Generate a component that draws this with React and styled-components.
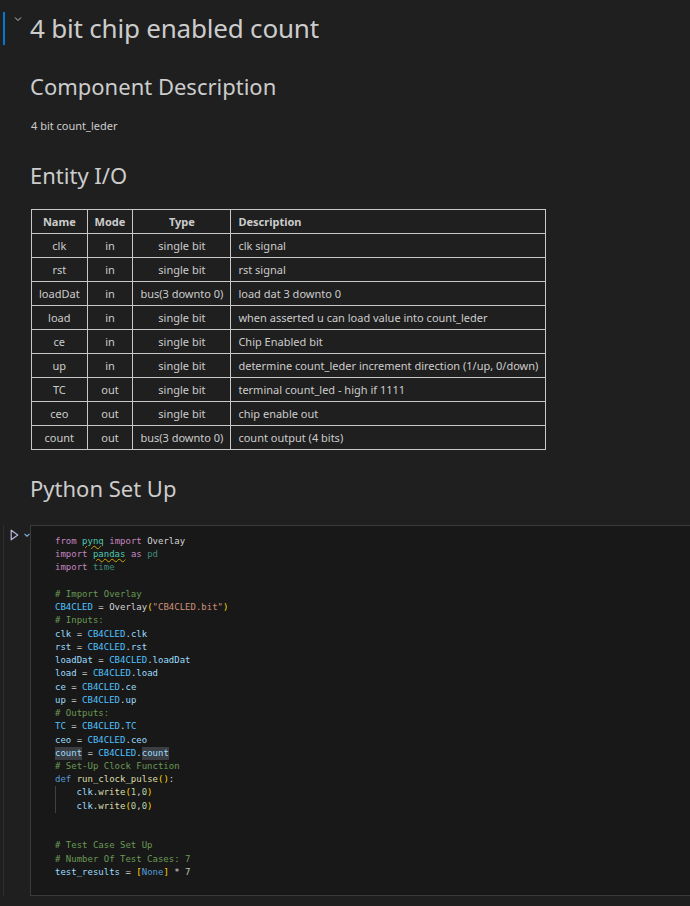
import styled, { createGlobalStyle } from "styled-components";

const Global = createGlobalStyle`
  html, body {
    margin: 0;
    padding: 0;
    background: #1f1f1f;
  }
  body {
    font-family: 'Noto Sans', 'Open Sans', sans-serif;
    color: #cccccc;
  }
`;

const rows = [
  ["clk", "in", "single bit", "clk signal"],
  ["rst", "in", "single bit", "rst signal"],
  ["loadDat", "in", "bus(3 downto 0)", "load dat 3 downto 0"],
  ["load", "in", "single bit", "when asserted u can load value into count_leder"],
  ["ce", "in", "single bit", "Chip Enabled bit"],
  ["up", "in", "single bit", "determine count_leder increment direction (1/up, 0/down)"],
  ["TC", "out", "single bit", "terminal count_led - high if 1111"],
  ["ceo", "out", "single bit", "chip enable out"],
  ["count", "out", "bus(3 downto 0)", "count output (4 bits)"],
];

const kw = "#c586c0";
const mod = "#4ec9b0";
const dim = "#3f8c7a";
const cm = "#6a9955";
const cst = "#4fc1ff";
const vr = "#9cdcfe";
const tx = "#d4d4d4";
const br = "#ffd700";
const str = "#ce9178";
const fn = "#dcdcaa";
const num = "#b5cea8";
const blue = "#569cd6";

const code = [
  [[kw, "from"], [tx, " "], [mod, "pynq", "sq"], [tx, " "], [kw, "import"], [tx, " Overlay"]],
  [[kw, "import"], [tx, " "], [mod, "pandas", "sq"], [tx, " "], [kw, "as"], [tx, " "], [dim, "pd"]],
  [[kw, "import"], [tx, " "], [dim, "time"]],
  [],
  [[cm, "# Import Overlay"]],
  [[cst, "CB4CLED"], [tx, " = Overlay"], [br, "("], [str, "\"CB4CLED.bit\""], [br, ")"]],
  [[cm, "# Inputs:"]],
  [[vr, "clk"], [tx, " = "], [cst, "CB4CLED"], [tx, "."], [vr, "clk"]],
  [[vr, "rst"], [tx, " = "], [cst, "CB4CLED"], [tx, "."], [vr, "rst"]],
  [[vr, "loadDat"], [tx, " = "], [cst, "CB4CLED"], [tx, "."], [vr, "loadDat"]],
  [[vr, "load"], [tx, " = "], [cst, "CB4CLED"], [tx, "."], [vr, "load"]],
  [[vr, "ce"], [tx, " = "], [cst, "CB4CLED"], [tx, "."], [vr, "ce"]],
  [[vr, "up"], [tx, " = "], [cst, "CB4CLED"], [tx, "."], [vr, "up"]],
  [[cm, "# Outputs:"]],
  [[cst, "TC"], [tx, " = "], [cst, "CB4CLED"], [tx, "."], [cst, "TC"]],
  [[vr, "ceo"], [tx, " = "], [cst, "CB4CLED"], [tx, "."], [vr, "ceo"]],
  [[vr, "count", "hl"], [tx, " = "], [cst, "CB4CLED"], [tx, "."], [vr, "count", "hl"]],
  [[cm, "# Set-Up Clock Function"]],
  [[blue, "def"], [tx, " "], [fn, "run_clock_pulse"], [br, "()"], [tx, ":"]],
  { indent: true, toks: [[vr, "clk"], [tx, "."], [fn, "write"], [br, "("], [num, "1"], [tx, ","], [num, "0"], [br, ")"]] },
  { indent: true, toks: [[vr, "clk"], [tx, "."], [fn, "write"], [br, "("], [num, "0"], [tx, ","], [num, "0"], [br, ")"]] },
  [],
  [],
  [[cm, "# Test Case Set Up"]],
  [[cm, "# Number Of Test Cases: 7"]],
  [[vr, "test_results"], [tx, " = "], [br, "["], [blue, "None"], [br, "]"], [tx, " * "], [num, "7"]],
];

export default function App() {
  return (
    <Page>
      <Global />
      <MarkdownCell>
        <TitleRow>
          <FocusBar />
          <Chevron width="8" height="6" viewBox="0 0 8 6">
            <path d="M1 1.5 L4 4.5 L7 1.5" fill="none" stroke="#c5c5c5" strokeWidth="1" />
          </Chevron>
          <Title>4 bit chip enabled count</Title>
        </TitleRow>
        <Body>
          <H2>Component Description</H2>
          <P>4 bit count_leder</P>
          <H2 $top={26}>Entity I/O</H2>
          <Table>
            <thead>
              <tr>
                <Th>Name</Th>
                <Th>Mode</Th>
                <Th>Type</Th>
                <Th $left>Description</Th>
              </tr>
            </thead>
            <tbody>
              {rows.map((r) => (
                <tr key={r[0]}>
                  <Td>{r[0]}</Td>
                  <Td>{r[1]}</Td>
                  <Td>{r[2]}</Td>
                  <Td $left>{r[3]}</Td>
                </tr>
              ))}
            </tbody>
          </Table>
          <H2 $top={23}>Python Set Up</H2>
        </Body>
      </MarkdownCell>

      <CodeCell>
        <Gutter>
          <RunIcon width="9" height="12" viewBox="0 0 9 12">
            <path d="M1.2 1.2 L7.8 6 L1.2 10.8 Z" fill="none" stroke="#b9b6dc" strokeWidth="1.2" strokeLinejoin="round" />
          </RunIcon>
          <SmallChevron width="6" height="4" viewBox="0 0 6 4">
            <path d="M0.5 0.8 L3 3.2 L5.5 0.8" fill="none" stroke="#7fb2e0" strokeWidth="1.1" />
          </SmallChevron>
        </Gutter>
        <Editor>
          {code.map((line, i) => {
            const toks = Array.isArray(line) ? line : line.toks;
            const indent = !Array.isArray(line);
            return (
              <Line key={i}>
                {indent && <Indent />}
                {toks.length === 0 ? "\u00a0" : toks.map((t, j) => (
                  <Tok key={j} $c={t[0]} $hl={t[2] === "hl"} $sq={t[2] === "sq"}>{t[1]}</Tok>
                ))}
              </Line>
            );
          })}
        </Editor>
      </CodeCell>
    </Page>
  );
}

const Page = styled.div`
  width: 690px;
  height: 906px;
  overflow: hidden;
  background: #1f1f1f;
`;

const MarkdownCell = styled.div`
  padding-top: 10px;
`;

const TitleRow = styled.div`
  display: flex;
  align-items: flex-start;
  height: 36px;
`;

const FocusBar = styled.div`
  width: 2px;
  height: 33px;
  margin: 2px 0 0 3px;
  background: #0078d4;
`;

const Chevron = styled.svg`
  display: block;
  margin: 6px 0 0 9px;
  flex-shrink: 0;
`;

const Title = styled.h1`
  margin: 0 0 0 8px;
  font-weight: 400;
  font-size: 26px;
  line-height: 36px;
  color: #cccccc;
  letter-spacing: -0.2px;
`;

const Body = styled.div`
  padding-left: 31px;
`;

const H2 = styled.h2`
  margin: ${(p) => p.$top || 25}px 0 0 -1px;
  font-weight: 400;
  font-size: 22px;
  line-height: 30px;
  color: #cccccc;
`;

const P = styled.p`
  margin: 17px 0 0 0;
  font-size: 11px;
  line-height: 16px;
  color: #cccccc;
`;

const Table = styled.table`
  margin-top: 19px;
  border-collapse: collapse;
  font-size: 11px;
  color: #cccccc;

  tr {
    height: 24px;
  }
`;

const Th = styled.th`
  border: 1px solid #c8c8c8;
  padding: 0 7px;
  font-weight: 700;
  text-align: ${(p) => (p.$left ? "left" : "center")};
  white-space: nowrap;
`;

const Td = styled.td`
  border: 1px solid #c8c8c8;
  padding: 0 7px;
  text-align: ${(p) => (p.$left ? "left" : "center")};
  white-space: nowrap;
`;

const CodeCell = styled.div`
  display: flex;
  margin-top: 22px;
  height: 371px;
`;

const Gutter = styled.div`
  width: 27px;
  margin-left: 3px;
  border-left: 1px solid #2e2e2e;
  display: flex;
  align-items: flex-start;
  padding-top: 4px;
  box-sizing: border-box;
`;

const RunIcon = styled.svg`
  margin-left: 6px;
  display: block;
`;

const SmallChevron = styled.svg`
  display: block;
  margin: 4px 0 0 5px;
`;

const Editor = styled.div`
  flex: 1;
  background: #181818;
  border: 1px solid #3a3a3a;
  border-right: none;
  padding: 9px 0 0 24px;
  font-family: 'DejaVu Sans Mono', 'Liberation Mono', monospace;
  font-size: 9px;
  line-height: 13.24px;
  white-space: pre;
`;

const Line = styled.div`
  height: 13.24px;
  display: flex;
`;

const Indent = styled.span`
  width: 21.6px;
  border-left: 1px solid #404040;
  box-sizing: border-box;
  flex-shrink: 0;
`;

const Tok = styled.span`
  color: ${(p) => p.$c};
  background: ${(p) => (p.$hl ? "#3a3d41" : "transparent")};
  text-decoration: ${(p) => (p.$sq ? "underline wavy #cca700" : "none")};
  text-decoration-thickness: 1px;
  text-underline-offset: 1px;
`;
